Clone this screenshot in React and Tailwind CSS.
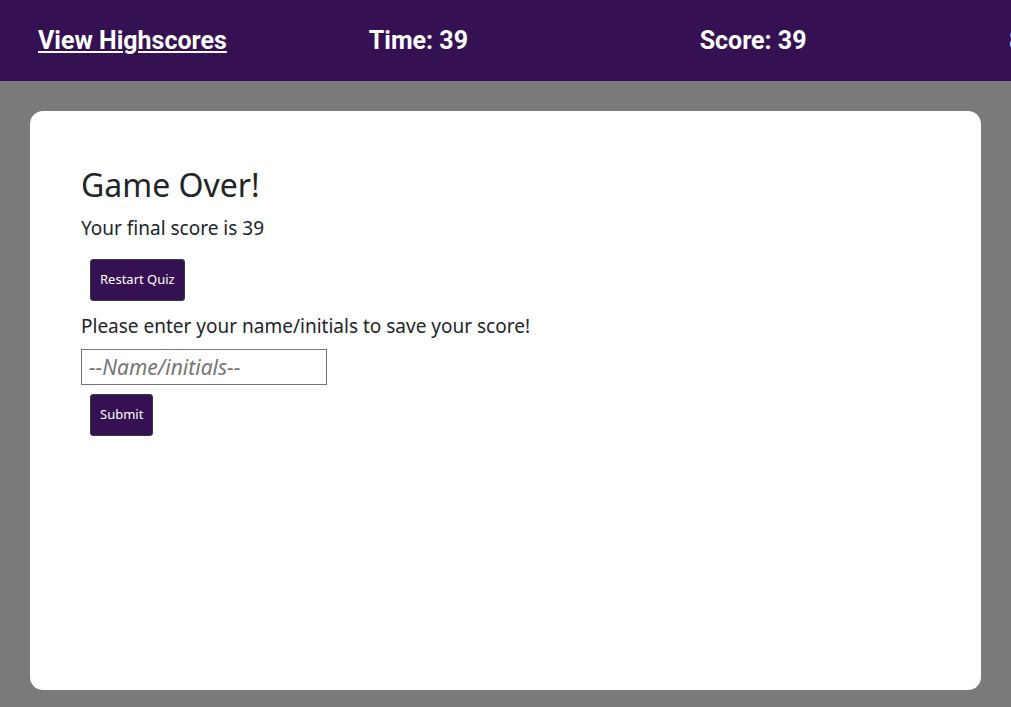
import { useState } from 'react';

const BUTTON =
  'ml-[9px] h-[42px] rounded-[3px] border border-[#343a40] bg-[#351153] px-[9px] pb-[2px] text-[13px] leading-5 text-white';

export default function App() {
  const [name, setName] = useState('');

  return (
    <div className="flex min-h-screen flex-col bg-[#7a7a7a] font-['Noto_Sans',sans-serif] text-[#212529]">
      <header className="flex h-[81px] items-center overflow-hidden bg-[#351153] pl-[38px] font-['Roboto',sans-serif] text-[25px] font-bold whitespace-nowrap text-white">
        <div className="w-[34%] shrink-0">
          <a href="#highscores" className="underline decoration-2 underline-offset-2">
            View Highscores
          </a>
        </div>
        <div className="w-[34%] shrink-0">Time: 39</div>
        <div className="w-[31.8%] shrink-0">Score: 39</div>
        <div className="shrink-0">8</div>
      </header>

      <main className="mx-[30px] mt-[30px] mb-[17px] flex-1 rounded-[13px] bg-white px-[51px] pt-[52px] pb-12">
        <h1 className="text-[32px] leading-[44px]">Game Over!</h1>
        <p className="text-[19px] leading-[42px]">Your final score is 39</p>
        <button type="button" className={`${BUTTON} mt-[10px]`}>
          Restart Quiz
        </button>
        <form onSubmit={(event) => event.preventDefault()}>
          <label htmlFor="player-name" className="block pt-[11px] pb-[9px] text-[19px] leading-7">
            Please enter your name/initials to save your score!
          </label>
          <input
            id="player-name"
            type="text"
            value={name}
            onChange={(event) => setName(event.target.value)}
            placeholder="--Name/initials--"
            className="block h-9 w-[246px] border border-[#767676] bg-white px-[7px] text-[21px] placeholder:text-[#757575] placeholder:italic"
          />
          <button type="submit" className={`${BUTTON} mt-[9px]`}>
            Submit
          </button>
        </form>
      </main>
    </div>
  );
}
